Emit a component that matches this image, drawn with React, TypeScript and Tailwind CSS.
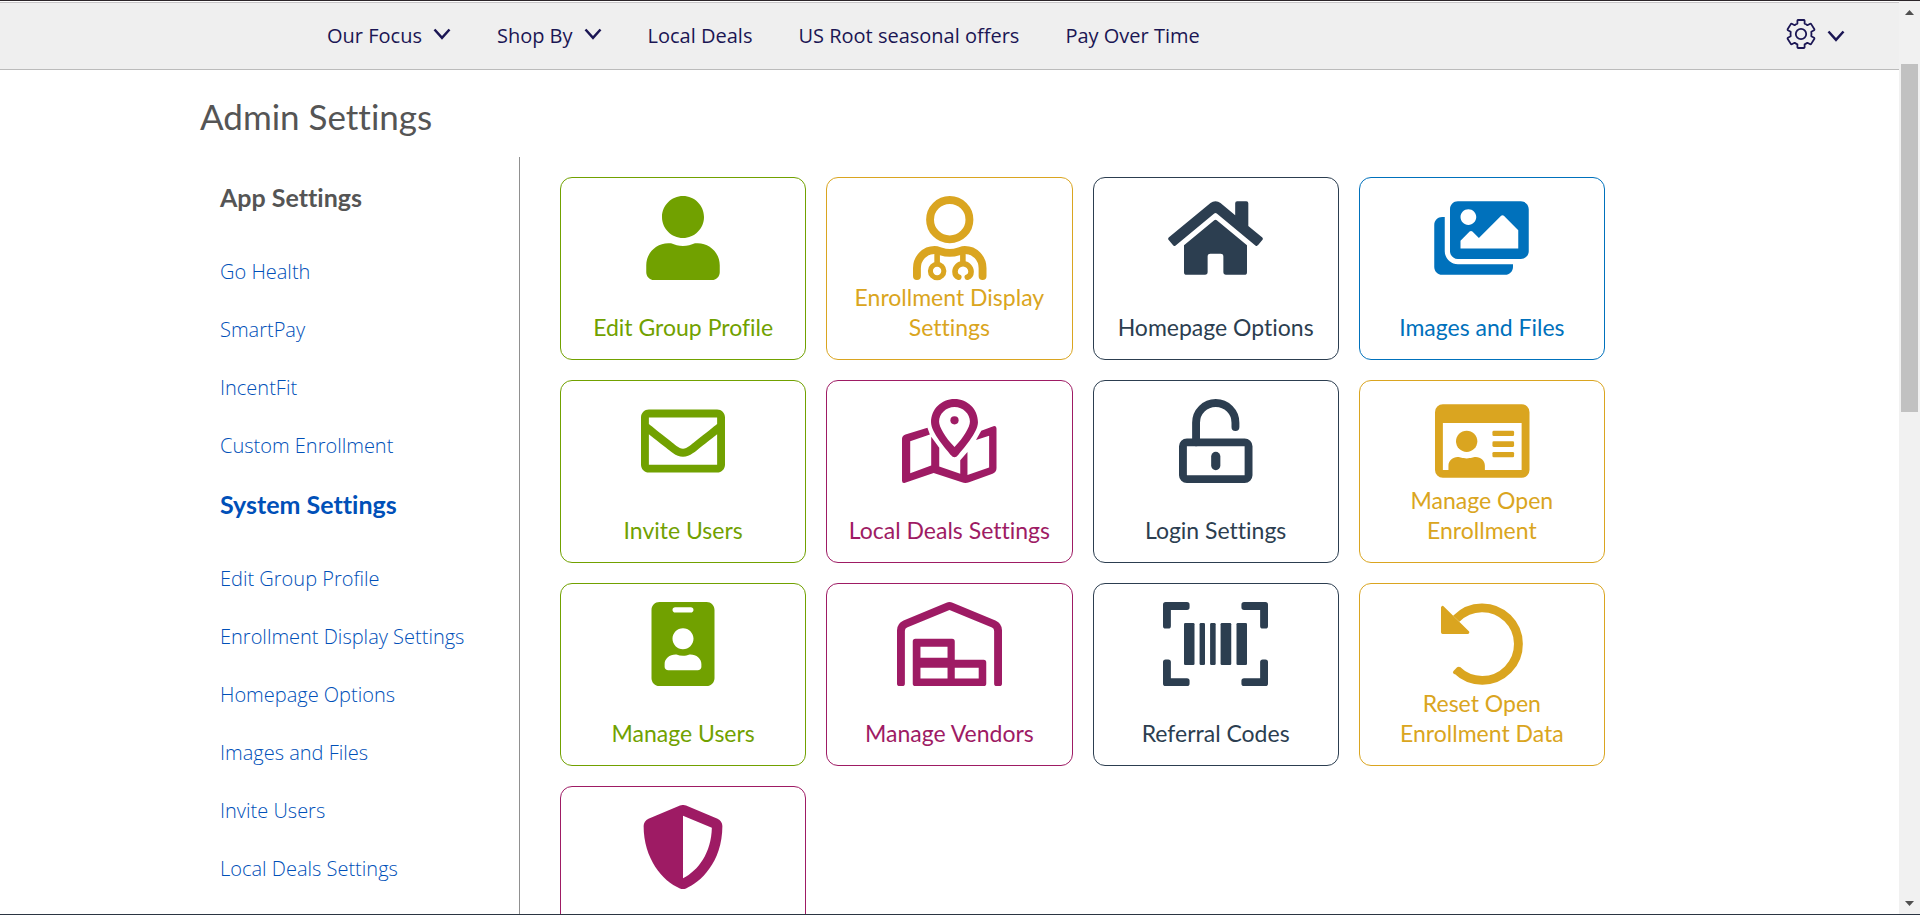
import type { ReactNode } from "react";
import { FaHome, FaIdBadge, FaImages, FaRegEnvelope, FaShieldAlt, FaUser } from "react-icons/fa";

const iconClass = "size-21";
const wideIconClass = "h-21 w-[95px]";

function Glyph({ width, children }: { width: number; children: ReactNode }) {
  return (
    <svg viewBox={`0 0 ${width} 512`} className="h-21 w-auto overflow-visible" fill="currentColor" aria-hidden="true">
      {children}
    </svg>
  );
}

function DoctorIcon() {
  return (
    <Glyph width={448}>
      <g fill="none" stroke="currentColor" strokeLinecap="round">
        <circle cx="224" cy="144" r="120" strokeWidth="48" />
        <path
          strokeWidth="48"
          d="M24 488V440C24 378 72 329 132 329C158 329 180 347 224 347C268 347 290 329 316 329C376 329 424 378 424 440V488"
        />
        <path strokeWidth="34" strokeLinecap="butt" d="M147 340V416M304 340V416" />
        <circle cx="147" cy="457" r="41" strokeWidth="31" />
        <path strokeWidth="34" d="M279 495C262 490 256 478 256 462A49 49 0 0 1 354 462C354 478 348 490 331 495" />
      </g>
    </Glyph>
  );
}

function MapPinIcon() {
  return (
    <Glyph width={576}>
      <path
        fillRule="evenodd"
        d="M320 355C312 355 306 351 301 345C270 305 177 205 177 141C177 62 240 0 320 0S463 62 463 141C463 205 370 305 339 345C334 351 328 355 320 355ZM320 48C268 48 226 90 226 137C226 170 262 232 320 293C378 232 414 170 414 137C414 90 372 48 320 48Z"
      />
      <circle cx="320" cy="130" r="25" />
      <path d="M155 175L21 216Q0 224 0 244V497Q0 517 19 511L193 451L365 508Q386 516 409 508L552 455Q576 445 576 420V180Q576 160 557 166L483 193L451 250L531 224V417L399 463V323L355 374V455L227 412V297L178 230V406L50 453V258L170 217Z" />
    </Glyph>
  );
}

function UnlockIcon() {
  return (
    <Glyph width={448}>
      <path
        fillRule="evenodd"
        d="M48 240H400A48 48 0 0 1 448 288V464A48 48 0 0 1 400 512H48A48 48 0 0 1 0 464V288A48 48 0 0 1 48 240ZM48 288V464H400V288Z"
      />
      <path
        d="M104 264V144A120 120 0 0 1 344 144V171"
        fill="none"
        stroke="currentColor"
        strokeWidth="48"
        strokeLinecap="round"
      />
      <rect x="196" y="322" width="56" height="112" rx="28" />
    </Glyph>
  );
}

function IdCardIcon() {
  return (
    <Glyph width={576}>
      <path
        fillRule="evenodd"
        d="M48 32H528A48 48 0 0 1 576 80V432A48 48 0 0 1 528 480H48A48 48 0 0 1 0 432V80A48 48 0 0 1 48 32ZM48 146V432H528V146Z"
      />
      <circle cx="193" cy="258" r="65" />
      <path d="M82 440V407C82 376 108 354 138 354C156 354 166 362 193 362S230 354 248 354C280 354 304 376 304 407V440Z" />
      <rect x="350" y="194" width="132" height="32" rx="8" />
      <rect x="350" y="258" width="132" height="34" rx="8" />
      <rect x="350" y="323" width="132" height="32" rx="8" />
    </Glyph>
  );
}

function WarehouseIcon() {
  return (
    <Glyph width={640}>
      <path d="M0 496V172Q0 130 40 112L301 4Q320 -3 339 4L600 112Q640 130 640 172V496Q640 512 624 512H608Q592 512 592 496V176Q592 161 579 155L320 49L61 155Q48 161 48 176V496Q48 512 32 512H16Q0 512 0 496Z" />
      <path
        fillRule="evenodd"
        d="M112 224H336Q352 224 352 240V352H528Q544 352 544 368V496Q544 512 528 512H112Q96 512 96 496V240Q96 224 112 224ZM143 272V340H308V272ZM143 400V466H308V400ZM352 400V466H498V400Z"
      />
    </Glyph>
  );
}

function BarcodeIcon() {
  const corner = "M16 0H146Q162 0 162 16V32Q162 48 146 48H48V146Q48 162 32 162H16Q0 162 0 146V16Q0 0 16 0Z";
  return (
    <Glyph width={640}>
      <path d={corner} />
      <path d={corner} transform="translate(640 0) scale(-1 1)" />
      <path d={corner} transform="translate(0 512) scale(1 -1)" />
      <path d={corner} transform="translate(640 512) scale(-1 -1)" />
      <rect x="128" y="128" width="64" height="256" rx="8" />
      <rect x="223" y="128" width="33" height="256" rx="8" />
      <rect x="287" y="128" width="34" height="256" rx="8" />
      <rect x="351" y="128" width="65" height="256" rx="8" />
      <rect x="448" y="128" width="64" height="256" rx="8" />
    </Glyph>
  );
}

function ResetIcon() {
  return (
    <Glyph width={512}>
      <path d="M99 102A221 221 0 1 1 102 414" fill="none" stroke="currentColor" strokeWidth="54" />
      <path d="M16 34V185H169Z" stroke="currentColor" strokeWidth="20" strokeLinejoin="round" />
      <path d="M112 406L90 428" stroke="currentColor" strokeWidth="22" strokeLinecap="round" />
    </Glyph>
  );
}

function Chevron() {
  return (
    <svg viewBox="0 0 18 12" className="h-3 w-[18px]" fill="none" stroke="currentColor" strokeWidth="2.5" aria-hidden="true">
      <path d="M1.5 1.5L9 9.8L16.5 1.5" />
    </svg>
  );
}

function GearIcon() {
  return (
    <svg
      viewBox="0 0 30 30"
      className="size-[30px]"
      fill="none"
      stroke="currentColor"
      strokeWidth="1.8"
      strokeLinejoin="round"
      aria-hidden="true"
    >
      <path d="M11.4 1.6Q11.5 1.1 12 1H18Q18.5 1.1 18.6 1.6V4.6Q20 5.1 21.4 6.2L24.2 4.8Q24.8 4.6 25.2 5.1L28.4 10.3Q28.6 10.9 28.1 11.3L25.3 12.8Q25.6 15 25.3 17.2L28.1 18.7Q28.6 19.1 28.4 19.7L25.2 24.9Q24.8 25.4 24.2 25.2L21.4 23.8Q20 24.9 18.6 25.4V28.4Q18.5 28.9 18 29H12Q11.5 28.9 11.4 28.4V25.4Q10 24.9 8.6 23.8L5.8 25.2Q5.2 25.4 4.8 24.9L1.6 19.7Q1.4 19.1 1.9 18.7L4.7 17.2Q4.4 15 4.7 12.8L1.9 11.3Q1.4 10.9 1.6 10.3L4.8 5.1Q5.2 4.6 5.8 4.8L8.6 6.2Q10 5.1 11.4 4.6Z" />
      <circle cx="15" cy="15" r="5.2" />
    </svg>
  );
}

const navItems = [
  { label: "Our Focus", menu: true },
  { label: "Shop By", menu: true },
  { label: "Local Deals", menu: false },
  { label: "US Root seasonal offers", menu: false },
  { label: "Pay Over Time", menu: false },
];

const appLinks = ["Go Health", "SmartPay", "IncentFit", "Custom Enrollment"];

const systemLinks = [
  "Edit Group Profile",
  "Enrollment Display Settings",
  "Homepage Options",
  "Images and Files",
  "Invite Users",
  "Local Deals Settings",
];

const green = "border-[#71a100] text-[#71a100]";
const gold = "border-[#daa520] text-[#daa520]";
const navy = "border-[#2c3e50] text-[#2c3e50]";
const blue = "border-[#0071bc] text-[#0071bc]";
const plum = "border-[#9e1b64] text-[#9e1b64]";

const tiles = [
  { label: "Edit Group Profile", tone: green, icon: <FaUser className={iconClass} /> },
  { label: "Enrollment Display Settings", tone: gold, icon: <DoctorIcon /> },
  { label: "Homepage Options", tone: navy, icon: <FaHome className={wideIconClass} /> },
  { label: "Images and Files", tone: blue, icon: <FaImages className={wideIconClass} /> },
  { label: "Invite Users", tone: green, icon: <FaRegEnvelope className={iconClass} /> },
  { label: "Local Deals Settings", tone: plum, icon: <MapPinIcon /> },
  { label: "Login Settings", tone: navy, icon: <UnlockIcon /> },
  { label: "Manage Open Enrollment", tone: gold, icon: <IdCardIcon /> },
  { label: "Manage Users", tone: green, icon: <FaIdBadge className={iconClass} /> },
  { label: "Manage Vendors", tone: plum, icon: <WarehouseIcon /> },
  { label: "Referral Codes", tone: navy, icon: <BarcodeIcon /> },
  { label: "Reset Open Enrollment Data", tone: gold, icon: <ResetIcon /> },
  { label: "", tone: plum, icon: <FaShieldAlt className={iconClass} /> },
];

function LinkList({ items }: { items: string[] }) {
  return (
    <ul>
      {items.map((item) => (
        <li key={item} className="flex h-[58px] items-center">
          <a href="#" className="font-light text-[#0050b8]">
            {item}
          </a>
        </li>
      ))}
    </ul>
  );
}

export default function App() {
  return (
    <div className="flex h-screen overflow-hidden border-t border-b border-t-[#2b2529] border-b-[#2b3542] bg-white font-['Open_Sans',sans-serif] text-[20px]">
      <div className="flex min-w-0 flex-1 flex-col overflow-hidden">
        <header className="mt-px flex h-[68px] shrink-0 items-center justify-between border-t border-b border-t-[#c8c6c8] border-b-[#bbbbbb] bg-[#efefef] pr-[54px] pl-[327px] text-[#1b1654]">
          <nav className="flex items-center gap-[46px]">
            {navItems.map((item) =>
              item.menu ? (
                <button key={item.label} type="button" className="flex items-center gap-[11px] whitespace-nowrap">
                  {item.label}
                  <span className="pb-1">
                    <Chevron />
                  </span>
                </button>
              ) : (
                <a key={item.label} href="#" className="whitespace-nowrap">
                  {item.label}
                </a>
              ),
            )}
          </nav>
          <button type="button" aria-label="Settings menu" className="flex items-center gap-[11px]">
            <span className="pb-1">
              <GearIcon />
            </span>
            <Chevron />
          </button>
        </header>

        <div className="mx-auto w-full max-w-[1499px] font-['Lato',sans-serif] [font-variant-ligatures:none]">
          <h1 className="pt-[23px] pb-[17px] text-[35px] leading-[47px] text-[#555555]">Admin Settings</h1>
          <div className="flex">
            <aside className="w-80 shrink-0 border-r border-[#909090] pt-[11px] pb-10 pl-5">
              <h2 className="pt-[14px] pb-[31px] text-[25px] leading-[30px] font-bold text-[#555555]">App Settings</h2>
              <div className="font-['Open_Sans',sans-serif]">
                <LinkList items={appLinks} />
              </div>
              <h2 className="pt-[14px] pb-[31px] text-[25px] leading-[30px] font-bold text-[#0050b8]">
                <a href="#">System Settings</a>
              </h2>
              <div className="font-['Open_Sans',sans-serif]">
                <LinkList items={systemLinks} />
              </div>
            </aside>
            <main className="grid flex-1 auto-rows-[183px] grid-cols-4 content-start gap-5 pt-5 pr-[94px] pl-10">
              {tiles.map((tile) => (
                <a
                  key={tile.label}
                  href="#"
                  className={`flex flex-col items-center justify-between rounded-xl border px-4 pt-[18px] pb-[17px] text-center text-[23px] leading-[30px] ${tile.tone}`}
                >
                  {tile.icon}
                  <span>{tile.label}</span>
                </a>
              ))}
            </main>
          </div>
        </div>
      </div>

      <div className="flex w-[21px] shrink-0 flex-col items-center bg-[#f1f1f1] text-[#505050]" aria-hidden="true">
        <svg viewBox="0 0 9 5" className="mt-[9px] h-[5px] w-[9px]" fill="currentColor">
          <path d="M4.5 0L9 5H0Z" />
        </svg>
        <div className="mt-[49px] h-[348px] w-[17px] bg-[#c1c1c1]" />
        <svg viewBox="0 0 9 5" className="mt-auto mb-2 h-[5px] w-[9px]" fill="currentColor">
          <path d="M0 0H9L4.5 5Z" />
        </svg>
      </div>
    </div>
  );
}
